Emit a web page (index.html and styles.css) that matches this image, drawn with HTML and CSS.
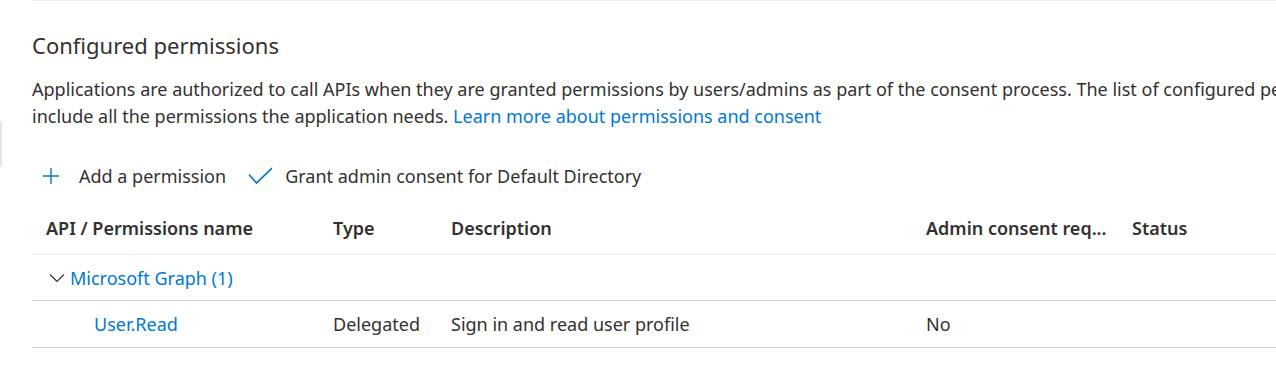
FILE: index.html
```html
<!DOCTYPE html>
<html lang="en">
<head>
    <meta charset="UTF-8">
    <meta name="viewport" content="width=device-width, initial-scale=1.0">
    <title>API permissions</title>
    <link rel="stylesheet" href="styles.css">
</head>
<body>
    <div class="panel-edge"></div>
    <div class="content">
        <div class="top-rule"></div>

        <h2>Configured permissions</h2>
        <p class="intro">
            Applications are authorized to call APIs when they are granted permissions by users/admins as part of the consent process. The list of configured permissions should<br>
            include all the permissions the application needs. <a href="#">Learn more about permissions and consent</a>
        </p>

        <div class="toolbar">
            <button class="cmd">
                <svg class="icon-plus" width="16" height="16" viewBox="0 0 16 16">
                    <path d="M8 0V16M0 8H16" fill="none" stroke="#0078d4" stroke-width="1.4"/>
                </svg>
                Add a permission
            </button>
            <button class="cmd">
                <svg class="icon-check" width="24" height="18" viewBox="0 0 24 18">
                    <path d="M1 7.5L8.5 16L24 1" fill="none" stroke="#0078d4" stroke-width="1.7"/>
                </svg>
                Grant admin consent for Default Directory
            </button>
        </div>

        <table class="perm-table">
            <colgroup>
                <col style="width: 287px">
                <col style="width: 118px">
                <col style="width: 475px">
                <col style="width: 206px">
                <col>
            </colgroup>
            <thead>
                <tr>
                    <th>API / Permissions name</th>
                    <th>Type</th>
                    <th>Description</th>
                    <th>Admin consent req...</th>
                    <th>Status</th>
                </tr>
            </thead>
            <tbody>
                <tr class="group-row">
                    <td colspan="5">
                        <a href="#" class="group-toggle">
                            <svg width="20" height="20" viewBox="0 0 20 20">
                                <path d="M4 6.5L11 13.5L18 6.5" fill="none" stroke="#323130" stroke-width="1.1"/>
                            </svg>
                            Microsoft Graph (1)
                        </a>
                    </td>
                </tr>
                <tr>
                    <td class="perm-name"><a href="#">User.Read</a></td>
                    <td>Delegated</td>
                    <td>Sign in and read user profile</td>
                    <td>No</td>
                    <td></td>
                </tr>
            </tbody>
        </table>
    </div>
</body>
</html>
```
FILE: styles.css
```css
body {
    font-family: "Noto Sans", "Open Sans", Arial, sans-serif;
    font-size: 18px;
    color: #323130;
    margin: 0;
    background-color: #fff;
    overflow: hidden;
}
a {
    color: #0078d4;
    text-decoration: none;
}
.panel-edge {
    position: fixed;
    left: 0;
    top: 121px;
    width: 2px;
    height: 46px;
    background-color: #e6e5e4;
}
.content {
    width: 1500px;
    padding-left: 32px;
}
.top-rule {
    height: 1px;
    background-color: #eaf2fb;
}
h2 {
    font-size: 22px;
    font-weight: 400;
    line-height: 30px;
    margin: 29px 0 0 0;
}
.intro {
    line-height: 27px;
    margin: 16px 0 0 0;
    white-space: nowrap;
}
.toolbar {
    display: flex;
    margin-top: 26px;
    height: 40px;
}
.cmd {
    display: flex;
    align-items: center;
    padding: 0 11px;
    border: none;
    background: none;
    font: inherit;
    color: #323130;
    line-height: 40px;
    cursor: pointer;
}
.icon-plus {
    margin-right: 20px;
}
.icon-check {
    margin-right: 13px;
}
.perm-table {
    width: 1244px;
    border-collapse: collapse;
    table-layout: fixed;
}
th, td {
    text-align: left;
    line-height: 24px;
    padding: 11px 14px;
    white-space: nowrap;
    overflow: hidden;
}
th {
    font-weight: 600;
    padding: 20px 14px 14px;
    border-bottom: 1px solid #edebe9;
}
td {
    border-bottom: 1px solid #cfcfcf;
}
.group-row td {
    padding: 11px 14px 10px;
}
.group-toggle {
    display: inline-flex;
    align-items: center;
    gap: 4px;
    height: 24px;
    vertical-align: top;
}
.perm-name {
    padding-left: 62px;
}
```
